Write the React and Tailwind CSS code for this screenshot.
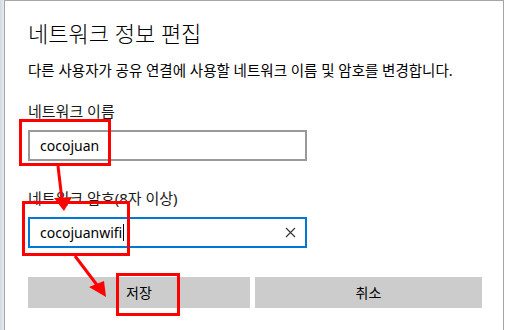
import React from "react";

const font = { fontFamily: '"Noto Sans", "Noto Sans CJK KR", sans-serif' };

function Field({ label, value, focused }) {
  return (
    <div className="flex flex-col">
      <div className="text-[15px] leading-[20px] text-[#1a1a1a]">{label}</div>
      <div
        className={
          focused
            ? "mt-[9px] flex h-[31px] w-[279px] items-center border-2 border-[#0078d7] pl-[10px] pr-[9px]"
            : "mt-[9px] flex h-[31px] w-[279px] items-center border-2 border-[#999999] pl-[10px] pr-[9px]"
        }
      >
        <span className="text-[14px] leading-[20px] text-black">{value}</span>
        {focused && <span className="ml-[1px] h-[17px] w-px bg-black" />}
        {focused && (
          <svg className="ml-auto" width="11" height="11" viewBox="0 0 11 11">
            <path d="M1 1 L10 10 M10 1 L1 10" stroke="#333" strokeWidth="1.1" />
          </svg>
        )}
      </div>
    </div>
  );
}

export default function App() {
  return (
    <div className="relative h-[330px] w-[507px] overflow-hidden bg-white" style={font}>
      <div className="flex h-full">
        <div className="w-[4px] bg-gradient-to-r from-[#d3dae2] to-[#e6ebf0]" />
        <div className="flex-1 border-l border-t border-[#a6a6a6] border-r pl-[23px] pr-[20px]">
          <h1 className="mt-[18px] text-[22px] font-light leading-[29px] text-black">네트워크 정보 편집</h1>
          <p className="mt-[12px] text-[14.5px] leading-[20px] text-black">
            다른 사용자가 공유 연결에 사용할 네트워크 이름 및 암호를 변경합니다.
          </p>
          <div className="mt-[21px]">
            <Field label="네트워크 이름" value="cocojuan" />
          </div>
          <div className="mt-[27px]">
            <Field label="네트워크 암호(8자 이상)" value="cocojuanwifi" focused />
          </div>
          <div className="mt-[29px] flex gap-[5px]">
            <button className="h-[31px] w-[222px] bg-[#cccccc] text-[14px] text-black">저장</button>
            <button className="h-[31px] w-[227px] bg-[#cccccc] text-[14px] text-black">취소</button>
          </div>
        </div>
        <div className="w-[3px] bg-white" />
      </div>

      {/* annotations */}
      <div className="absolute left-[19px] top-[119px] h-[47px] w-[92px] border-[3px] border-[#ff0000]" />
      <div className="absolute left-[22px] top-[201px] h-[55px] w-[108px] border-[3px] border-[#ff0000]" />
      <div className="absolute left-[116px] top-[273px] h-[43px] w-[64px] border-[3px] border-[#ff0000]" />
      <svg className="absolute left-0 top-0" width="507" height="330" viewBox="0 0 507 330">
        <line x1="58" y1="166" x2="62" y2="200" stroke="#ff0000" strokeWidth="3" />
        <polygon points="54,198 72,197 64,211" fill="#ff0000" />
        <line x1="75" y1="256" x2="97" y2="285" stroke="#ff0000" strokeWidth="3" />
        <polygon points="89,287 104,281 106,297" fill="#ff0000" />
      </svg>
    </div>
  );
}
